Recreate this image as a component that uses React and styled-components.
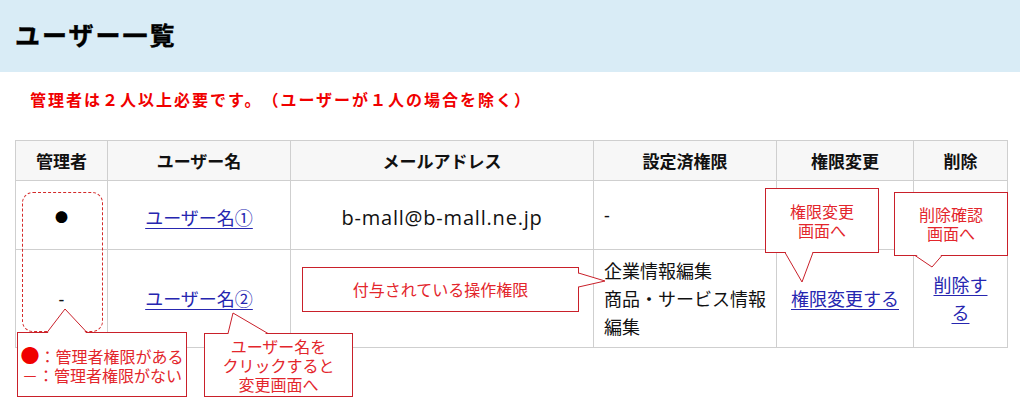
import React from 'react';
import styled, { createGlobalStyle } from 'styled-components';

const GlobalStyle = createGlobalStyle`
  html, body {
    margin: 0;
    padding: 0;
    background: #fff;
  }
  body {
    font-family: 'Noto Sans', 'Noto Sans CJK JP', sans-serif;
    color: #111;
    text-spacing-trim: space-all;
  }
`;

const Page = styled.div`
  position: relative;
  width: 1020px;
  height: 402px;
  overflow: hidden;
`;

const TitleBar = styled.header`
  height: 72px;
  background: #d9ecf6;
  display: flex;
  align-items: center;
  padding: 0 0 5px 15px;
  box-sizing: border-box;
`;

const Title = styled.h1`
  margin: 0;
  font-size: 25px;
  font-weight: 700;
  letter-spacing: 2px;
  color: #000;
  -webkit-text-stroke: 0.4px #000;
`;

const Notice = styled.p`
  margin: 16px 0 0 30px;
  font-size: 16px;
  line-height: 24px;
  font-weight: 700;
  letter-spacing: 2px;
  color: #f00000;
`;

const Table = styled.table`
  margin: 28px 0 0 15px;
  width: 992px;
  border-collapse: collapse;
  table-layout: fixed;
`;

const Col = styled.col`
  width: ${p => p.$w}px;
`;

const HeadRow = styled.tr`
  height: 40px;
`;

const BodyRow = styled.tr`
  height: ${p => p.$h}px;
`;

const Th = styled.th`
  background: #f7f7f7;
  border: 1px solid #cfcfcf;
  padding: 0;
  font-size: 17px;
  font-weight: 700;
  color: #111;
  text-align: center;
`;

const Td = styled.td`
  border: 1px solid #cfcfcf;
  padding: ${p => (p.$narrow ? '0 16px' : '0 10px')};
  padding-top: ${p => p.$top || 0}px;
  font-size: 18px;
  line-height: 28px;
  text-align: ${p => (p.$left ? 'left' : 'center')};
  vertical-align: middle;
  color: #111;
`;

const Mail = styled.span`
  font-family: 'Open Sans', 'Noto Sans', sans-serif;
  font-size: 20px;
  letter-spacing: 0.8px;
`;

const Dot = styled.span`
  font-size: 13px;
  color: #000;
  vertical-align: 3px;
`;

const Link = styled.a`
  color: #2626b0;
  text-decoration: underline;
  text-underline-offset: 3px;
  cursor: pointer;
`;

const Callout = styled.div`
  position: absolute;
  left: ${p => p.$x}px;
  top: ${p => p.$y}px;
  width: ${p => p.$w}px;
  height: ${p => p.$h}px;
  box-sizing: border-box;
  border: 1px solid #c9202a;
  background: #fff;
  color: #e3262c;
  font-family: 'Noto Sans CJK JP', sans-serif;
  font-size: 16px;
  line-height: 19px;
  display: flex;
  align-items: center;
  justify-content: center;
  text-align: center;
  z-index: 3;
`;

const TailSvg = styled.svg`
  position: absolute;
  left: -1px;
  top: -1px;
  width: 1px;
  height: 1px;
  overflow: visible;
`;

const AdminFrame = styled.div`
  position: absolute;
  left: 22px;
  top: 192px;
  width: 81px;
  height: 140px;
  box-sizing: border-box;
  border: 1px dashed #d42a2a;
  border-radius: 11px;
  z-index: 2;
  pointer-events: none;
`;

const RedMark = styled.span`
  font-size: 19px;
  color: #f00000;
`;

// tail: a and b sit on the box edge, t is the tip (local coords of the callout)
const Tail = ({ a, t, b, inward }) => {
  const [ix, iy] = inward;
  const fill = `${a[0] + ix},${a[1] + iy} ${t[0]},${t[1]} ${b[0] + ix},${b[1] + iy}`;
  const line = `${a[0]},${a[1]} ${t[0]},${t[1]} ${b[0]},${b[1]}`;
  return (
    <TailSvg>
      <polygon points={fill} fill="#fff" />
      <polyline points={line} fill="none" stroke="#c9202a" strokeWidth="1" />
    </TailSvg>
  );
};

const App = () => (
  <Page>
    <GlobalStyle />
    <TitleBar>
      <Title>ユーザー一覧</Title>
    </TitleBar>
    <Notice>管理者は２人以上必要です。（ユーザーが１人の場合を除く）</Notice>

    <Table>
      <colgroup>
        <Col $w={92} />
        <Col $w={183} />
        <Col $w={303} />
        <Col $w={183} />
        <Col $w={137} />
        <Col $w={94} />
      </colgroup>
      <thead>
        <HeadRow>
          <Th>管理者</Th>
          <Th>ユーザー名</Th>
          <Th>メールアドレス</Th>
          <Th>設定済権限</Th>
          <Th>権限変更</Th>
          <Th>削除</Th>
        </HeadRow>
      </thead>
      <tbody>
        <BodyRow $h={69}>
          <Td $top={5}><Dot>●</Dot></Td>
          <Td $top={5}><Link>ユーザー名①</Link></Td>
          <Td $top={5}><Mail>b-mall@b-mall.ne.jp</Mail></Td>
          <Td $left>-</Td>
          <Td></Td>
          <Td></Td>
        </BodyRow>
        <BodyRow $h={98}>
          <Td>-</Td>
          <Td><Link>ユーザー名②</Link></Td>
          <Td></Td>
          <Td $left>企業情報編集<br />商品・サービス情報編集</Td>
          <Td><Link>権限変更する</Link></Td>
          <Td $narrow><Link>削除する</Link></Td>
        </BodyRow>
      </tbody>
    </Table>

    <AdminFrame />

    <Callout $x={17} $y={332} $w={170} $h={65}>
      <Tail a={[30, 0.5]} t={[48, -23]} b={[70, 0.5]} inward={[0, 1.5]} />
      <div>
        <RedMark>●</RedMark>：管理者権限がある<br />
        －：管理者権限がない
      </div>
    </Callout>

    <Callout $x={204} $y={333} $w={149} $h={64}>
      <Tail a={[24, 0.5]} t={[29, -20]} b={[64, 0.5]} inward={[0, 1.5]} />
      <div>ユーザー名を<br />クリックすると<br />変更画面へ</div>
    </Callout>

    <Callout $x={302} $y={267} $w={277} $h={45}>
      <Tail a={[276.5, 6]} t={[303, 14]} b={[276.5, 20]} inward={[-1.5, 0]} />
      <div>付与されている操作権限</div>
    </Callout>

    <Callout $x={765} $y={188} $w={114} $h={65}>
      <Tail a={[20, 64.5]} t={[37, 94]} b={[48, 64.5]} inward={[0, -1.5]} />
      <div>権限変更<br />画面へ</div>
    </Callout>

    <Callout $x={894} $y={192} $w={114} $h={64}>
      <Tail a={[21, 63.5]} t={[38, 75]} b={[48, 63.5]} inward={[0, -1.5]} />
      <div>削除確認<br />画面へ</div>
    </Callout>
  </Page>
);

export default App;
